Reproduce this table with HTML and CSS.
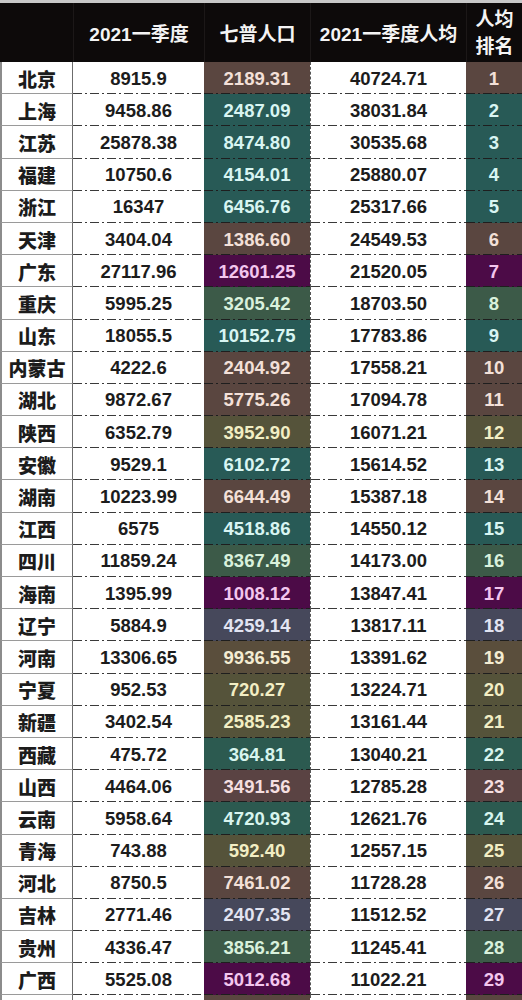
FILE: index.html
```html
<!DOCTYPE html>
<html lang="zh">
<head>
<meta charset="utf-8">
<link rel="stylesheet" href="styles.css">
</head>
<body>
<div class="table">
  <div class="head">
    <div class="hc"></div>
    <div class="hc">2021一季度</div>
    <div class="hc">七普人口</div>
    <div class="hc">2021一季度人均</div>
    <div class="hc two">人均<br>排名</div>
  </div>
  <div class="row"><div class="name">北京</div><div class="num">8915.9</div><div class="col br">2189.31</div><div class="num">40724.71</div><div class="col br">1</div></div>
  <div class="row"><div class="name">上海</div><div class="num">9458.86</div><div class="col te">2487.09</div><div class="num">38031.84</div><div class="col te">2</div></div>
  <div class="row"><div class="name">江苏</div><div class="num">25878.38</div><div class="col te">8474.80</div><div class="num">30535.68</div><div class="col te">3</div></div>
  <div class="row"><div class="name">福建</div><div class="num">10750.6</div><div class="col te">4154.01</div><div class="num">25880.07</div><div class="col te">4</div></div>
  <div class="row"><div class="name">浙江</div><div class="num">16347</div><div class="col te">6456.76</div><div class="num">25317.66</div><div class="col te">5</div></div>
  <div class="row"><div class="name">天津</div><div class="num">3404.04</div><div class="col br">1386.60</div><div class="num">24549.53</div><div class="col br">6</div></div>
  <div class="row"><div class="name">广东</div><div class="num">27117.96</div><div class="col pu">12601.25</div><div class="num">21520.05</div><div class="col pu">7</div></div>
  <div class="row"><div class="name">重庆</div><div class="num">5995.25</div><div class="col gr">3205.42</div><div class="num">18703.50</div><div class="col gr">8</div></div>
  <div class="row"><div class="name">山东</div><div class="num">18055.5</div><div class="col te">10152.75</div><div class="num">17783.86</div><div class="col te">9</div></div>
  <div class="row"><div class="name">内蒙古</div><div class="num">4222.6</div><div class="col br">2404.92</div><div class="num">17558.21</div><div class="col br">10</div></div>
  <div class="row"><div class="name">湖北</div><div class="num">9872.67</div><div class="col br">5775.26</div><div class="num">17094.78</div><div class="col br">11</div></div>
  <div class="row"><div class="name">陕西</div><div class="num">6352.79</div><div class="col ol">3952.90</div><div class="num">16071.21</div><div class="col ol">12</div></div>
  <div class="row"><div class="name">安徽</div><div class="num">9529.1</div><div class="col te">6102.72</div><div class="num">15614.52</div><div class="col te">13</div></div>
  <div class="row"><div class="name">湖南</div><div class="num">10223.99</div><div class="col br">6644.49</div><div class="num">15387.18</div><div class="col br">14</div></div>
  <div class="row"><div class="name">江西</div><div class="num">6575</div><div class="col te">4518.86</div><div class="num">14550.12</div><div class="col te">15</div></div>
  <div class="row"><div class="name">四川</div><div class="num">11859.24</div><div class="col gr">8367.49</div><div class="num">14173.00</div><div class="col gr">16</div></div>
  <div class="row"><div class="name">海南</div><div class="num">1395.99</div><div class="col pu">1008.12</div><div class="num">13847.41</div><div class="col pu">17</div></div>
  <div class="row"><div class="name">辽宁</div><div class="num">5884.9</div><div class="col sl">4259.14</div><div class="num">13817.11</div><div class="col sl">18</div></div>
  <div class="row"><div class="name">河南</div><div class="num">13306.65</div><div class="col ob">9936.55</div><div class="num">13391.62</div><div class="col ob">19</div></div>
  <div class="row"><div class="name">宁夏</div><div class="num">952.53</div><div class="col ol">720.27</div><div class="num">13224.71</div><div class="col ol">20</div></div>
  <div class="row"><div class="name">新疆</div><div class="num">3402.54</div><div class="col ol">2585.23</div><div class="num">13161.44</div><div class="col ol">21</div></div>
  <div class="row"><div class="name">西藏</div><div class="num">475.72</div><div class="col tg">364.81</div><div class="num">13040.21</div><div class="col tg">22</div></div>
  <div class="row"><div class="name">山西</div><div class="num">4464.06</div><div class="col mb">3491.56</div><div class="num">12785.28</div><div class="col mb">23</div></div>
  <div class="row"><div class="name">云南</div><div class="num">5958.64</div><div class="col tg">4720.93</div><div class="num">12621.76</div><div class="col tg">24</div></div>
  <div class="row"><div class="name">青海</div><div class="num">743.88</div><div class="col ol">592.40</div><div class="num">12557.15</div><div class="col ol">25</div></div>
  <div class="row"><div class="name">河北</div><div class="num">8750.5</div><div class="col br">7461.02</div><div class="num">11728.28</div><div class="col br">26</div></div>
  <div class="row"><div class="name">吉林</div><div class="num">2771.46</div><div class="col sl">2407.35</div><div class="num">11512.52</div><div class="col sl">27</div></div>
  <div class="row"><div class="name">贵州</div><div class="num">4336.47</div><div class="col gr">3856.21</div><div class="num">11245.41</div><div class="col gr">28</div></div>
  <div class="row"><div class="name">广西</div><div class="num">5525.08</div><div class="col pu">5012.68</div><div class="num">11022.21</div><div class="col pu">29</div></div>
  <div class="row"><div class="name"></div><div class="num"></div><div class="col br"></div><div class="num"></div><div class="col br"></div></div>
</div>
</body>
</html>
```

FILE: styles.css
```css
html, body {
  margin: 0;
  padding: 0;
  background: #ffffff;
}
body {
  width: 522px;
  height: 1000px;
  overflow: hidden;
}
.table {
  width: 522px;
  font-family: "Liberation Sans", "Noto Sans CJK SC", sans-serif;
}
.head {
  display: grid;
  grid-template-columns: 73px 131px 106px 156px 56px;
  height: 59px;
  border-top: 3px solid #c8c8c8;
  background: #0d0a0a;
}
.hc {
  display: flex;
  align-items: center;
  justify-content: center;
  color: #f4f4f4;
  font-family: "Liberation Sans", "Noto Sans CJK SC", sans-serif;
  font-size: 19px;
  font-weight: 700;
  border-left: 1px solid #1c1818;
  white-space: nowrap;
}
.hc:first-child {
  border-left: none;
}
.hc.two {
  line-height: 27px;
  text-align: center;
  padding-top: 1px;
}
.row {
  display: grid;
  grid-template-columns: 73px 131px 106px 156px 56px;
  height: 32.2px;
}
.row > div {
  display: flex;
  align-items: center;
  justify-content: center;
  box-sizing: border-box;
  font-size: 18.5px;
  font-weight: 700;
  white-space: nowrap;
  padding-top: 1px;
}
.name {
  font-family: "Noto Sans CJK SC", sans-serif;
  font-size: 19px !important;
  font-weight: 900 !important;
  color: #1c1c1c;
  border-left: 2px solid #8c8c8c;
  border-right: 1px solid #6c6c6c;
  border-bottom: 1px solid #9a9a9a;
}
.num {
  color: #1c1c1c;
  background-image: repeating-linear-gradient(to right, #3a3a3a 0 9px, transparent 9px 12px, #3a3a3a 12px 14px, transparent 14px 17px);
  background-size: 100% 1px;
  background-repeat: no-repeat;
  background-position: left bottom;
}
.row > .num:nth-child(4) {
  border-left: 1px dashed #555;
}
.col {
  background-image: repeating-linear-gradient(to right, #1e1e1e 0 9px, transparent 9px 12px, #1e1e1e 12px 14px, transparent 14px 17px);
  background-size: 100% 1px;
  background-repeat: no-repeat;
  background-position: left bottom;
}
.br { background-color: #5a4640; color: #f3e0d8; }
.mb { background-color: #5a4343; color: #f5dfe0; }
.te { background-color: #285a56; color: #d8f5f2; }
.tg { background-color: #2c5a50; color: #d8f5ee; }
.pu { background-color: #4c0b47; color: #f3c6ee; }
.gr { background-color: #3c5a48; color: #d9f1dc; }
.sl { background-color: #46485b; color: #e2e4f2; }
.ol { background-color: #55533a; color: #f2eec4; }
.ob { background-color: #5a4e3c; color: #f4ecd2; }
```
